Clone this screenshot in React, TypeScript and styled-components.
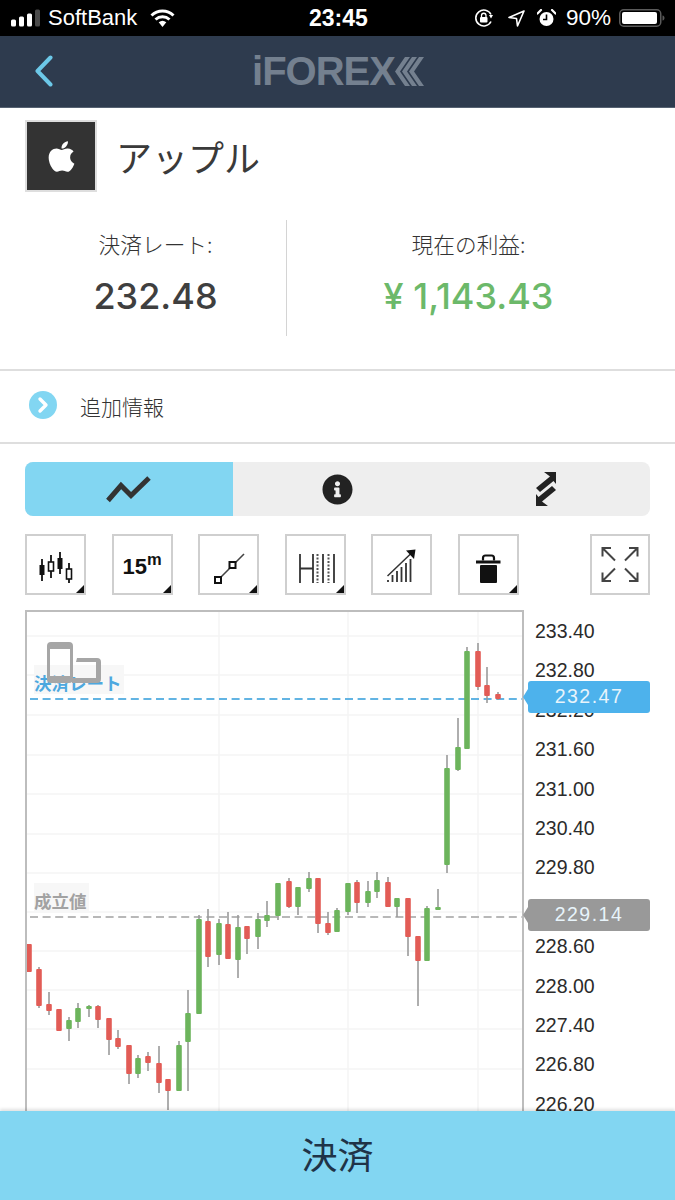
import React, {FC} from "react";
import styled, {createGlobalStyle} from "styled-components";
import {FaApple, FaInfoCircle} from "react-icons/fa";

const SANS = `"Liberation Sans", Arial, "Noto Sans CJK JP", sans-serif`;
const JP = `"Noto Sans CJK JP", "Noto Sans", sans-serif`;

// x, wick top, wick bottom, body top, body bottom, rising
type Candle = [number, number, number, number, number, boolean];
const CANDLES: Candle[] = [
  [29, 944, 972, 944, 972, false],
  [39, 967, 1008, 969, 1006, false],
  [49, 992, 1015, 1004, 1011, false],
  [59, 1009, 1031, 1009, 1031, false],
  [69, 1017, 1041, 1020, 1029, true],
  [78, 1003, 1028, 1008, 1022, true],
  [89, 1005, 1017, 1006, 1009, true],
  [98, 1005, 1028, 1006, 1020, false],
  [109, 1018, 1055, 1018, 1040, false],
  [118, 1030, 1049, 1038, 1047, false],
  [129, 1045, 1084, 1045, 1074, false],
  [138, 1055, 1078, 1058, 1074, true],
  [148, 1052, 1071, 1056, 1063, false],
  [159, 1046, 1093, 1063, 1083, false],
  [168, 1079, 1110, 1079, 1091, false],
  [179, 1041, 1091, 1045, 1091, true],
  [188, 990, 1091, 1013, 1042, true],
  [199, 915, 1014, 919, 1014, true],
  [208, 909, 967, 921, 957, false],
  [219, 919, 965, 923, 955, true],
  [228, 912, 959, 924, 959, false],
  [238, 915, 978, 927, 960, true],
  [247, 926, 954, 926, 939, false],
  [258, 913, 949, 919, 937, true],
  [267, 901, 927, 915, 921, true],
  [278, 883, 920, 883, 916, true],
  [289, 878, 908, 881, 907, false],
  [298, 887, 915, 887, 907, true],
  [309, 872, 892, 878, 889, true],
  [318, 878, 933, 878, 924, false],
  [328, 912, 935, 923, 933, false],
  [337, 908, 932, 910, 932, true],
  [348, 883, 915, 883, 912, true],
  [357, 880, 913, 882, 903, false],
  [368, 881, 907, 891, 903, true],
  [377, 872, 898, 880, 892, true],
  [388, 877, 907, 882, 907, false],
  [397, 898, 917, 898, 907, true],
  [408, 898, 956, 898, 937, false],
  [418, 936, 1006, 936, 961, false],
  [427, 906, 961, 908, 961, true],
  [438, 889, 910, 907, 910, true],
  [447, 755, 873, 768, 865, true],
  [458, 718, 771, 747, 770, true],
  [467, 647, 749, 651, 749, true],
  [478, 643, 690, 651, 687, false],
  [487, 667, 703, 685, 696, false],
  [498, 692, 700, 694, 699, false],
];
const GRID_Y = [636, 675, 715, 755, 794, 834, 873, 912, 951, 990, 1029, 1069];
const GRID_X = [219, 348, 478];
const PRICES = ["233.40", "232.80", "232.20", "231.60", "231.00", "230.40", "229.80", "229.20", "228.60", "228.00", "227.40", "226.80", "226.20"];

const App: FC = () => <Page>
  <GlobalStyle/>
  <StatusBar>
    <StatusSide>
      <SignalIcon/>
      <Carrier>SoftBank</Carrier>
      <WifiIcon/>
    </StatusSide>
    <Clock>23:45</Clock>
    <StatusRight>
      <RotationLockIcon/>
      <LocationIcon/>
      <AlarmIcon/>
      <Percent>90%</Percent>
      <BatteryIcon/>
    </StatusRight>
  </StatusBar>

  <NavBar>
    <BackIcon/>
    <Logo>
      <LogoText>iFOREX</LogoText>
      <LogoChevrons/>
    </Logo>
  </NavBar>

  <ProductHeader>
    <ProductIcon><FaApple size={35} color="#fff"/></ProductIcon>
    <ProductName>アップル</ProductName>
  </ProductHeader>

  <Stats>
    <Stat>
      <StatLabel>決済レート:</StatLabel>
      <StatValue>232.48</StatValue>
    </Stat>
    <StatDivider/>
    <Stat>
      <StatLabel>現在の利益:</StatLabel>
      <StatValue $positive>¥ 1,143.43</StatValue>
    </Stat>
  </Stats>

  <InfoRow>
    <InfoBullet>
      <svg width="28" height="28" viewBox="0 0 28 28">
        <path d="M11 8l6 6-6 6" fill="none" stroke="#fff" strokeWidth="3.4" strokeLinecap="round" strokeLinejoin="round"/>
      </svg>
    </InfoBullet>
    <InfoText>追加情報</InfoText>
  </InfoRow>

  <Tabs>
    <Tab $active><LineTabIcon/></Tab>
    <Tab><FaInfoCircle size={31} color="#222"/></Tab>
    <Tab><SwapTabIcon/></Tab>
  </Tabs>

  <Tools>
    <ToolButton $menu><CandlesTool/></ToolButton>
    <ToolButton $menu><PeriodText>15<sup>m</sup></PeriodText></ToolButton>
    <ToolButton $menu><LineTool/></ToolButton>
    <ToolButton $menu><FibTool/></ToolButton>
    <ToolButton><VolumeTool/></ToolButton>
    <ToolButton $menu><TrashTool/></ToolButton>
    <ExpandButton><ExpandTool/></ExpandButton>
  </Tools>

  <ChartRow>
    <ChartFrame>
      <ChartSvg viewBox="27 612 495 501">
        {GRID_Y.map(y => <line key={y} x1="27" x2="522" y1={y} y2={y} stroke="#f4f4f4" strokeWidth="1.5"/>)}
        {GRID_X.map(x => <line key={x} x1={x} x2={x} y1="612" y2="1113" stroke="#f4f4f4" strokeWidth="1.5"/>)}
        <line x1="30" x2="523" y1="699" y2="699" stroke="#62b4e3" strokeWidth="2" strokeDasharray="8 4.6"/>
        <line x1="30" x2="523" y1="917" y2="917" stroke="#b8b8b8" strokeWidth="2" strokeDasharray="8 4.6"/>
        {CANDLES.map(([x, wickTop, wickBottom, bodyTop, bodyBottom, rising]) => <g key={x}>
          <line x1={x} x2={x} y1={wickTop} y2={wickBottom} stroke="#9a9a9a" strokeWidth="1.6"/>
          <rect x={x - 2.8} y={bodyTop} width="5.6" height={bodyBottom - bodyTop} rx="1" fill={rising ? "#6cb45c" : "#e25c56"}/>
        </g>)}
      </ChartSvg>
      <LineLabel $color="#4da8df" $top={53}>決済レート</LineLabel>
      <LineLabel $color="#a2a2a2" $top={271}>成立値</LineLabel>
      <DevicesBadge viewBox="46 641 56 43">
        <g fill="#a6a6a6">
          <path d="M77 658h20a4 4 0 0 1 4 4v17a4 4 0 0 1-4 4H72v-5h24v-16H76z"/>
          <path fillRule="evenodd" d="M51 642h18a4 4 0 0 1 4 4v33a4 4 0 0 1-4 4H51a4 4 0 0 1-4-4v-33a4 4 0 0 1 4-4zm-1 7v27h20v-27z"/>
        </g>
      </DevicesBadge>
    </ChartFrame>
    <PriceAxis>
      {PRICES.map(price => <Price key={price}>{price}</Price>)}
    </PriceAxis>
    <PriceTag $color="#4db2ec" $top={71}>232.47</PriceTag>
    <PriceTag $color="#999999" $top={289}>229.14</PriceTag>
  </ChartRow>

  <SettleButton>決済</SettleButton>
</Page>;
export default App;

const SignalIcon: FC = () => <svg width="30" height="18" viewBox="0 0 30 18">
  <g fill="#fff">
    <rect x="0" y="10.5" width="5" height="7" rx="1.5"/>
    <rect x="8" y="7.5" width="5" height="10" rx="1.5"/>
    <rect x="16" y="4.5" width="5" height="13" rx="1.5"/>
  </g>
  <rect x="24" y="0.5" width="5" height="17" rx="1.5" fill="#4a4a4a"/>
</svg>;

const WifiIcon: FC = () => <svg width="25" height="18" viewBox="0 0 25 18">
  <g fill="none" stroke="#fff" strokeWidth="3">
    <path d="M1.5 6.5a16 16 0 0 1 22 0"/>
    <path d="M5.5 10.5a10.5 10.5 0 0 1 14 0"/>
  </g>
  <path d="M8.7 13.2a6 6 0 0 1 7.6 0L12.5 18z" fill="#fff"/>
</svg>;

const RotationLockIcon: FC = () => <svg width="22" height="18" viewBox="0 0 22 18">
  <path d="M17 5.5A8 8 0 1 0 17 12.5" fill="none" stroke="#fff" strokeWidth="1.6"/>
  <path d="M15 8l4 0-2-3.500z" transform="rotate(180 17 7)" fill="#fff"/>
  <rect x="6" y="8" width="7.500" height="5.500" rx="1" fill="#fff"/>
  <path d="M7.500 8V6.500a2.200 2.200 0 0 1 4.500 0V8" fill="none" stroke="#fff" strokeWidth="1.300"/>
</svg>;

const LocationIcon: FC = () => <svg width="17" height="17" viewBox="0 0 17 17">
  <path d="M16 1L1 7.500l7.500 1 1 7.500z" fill="none" stroke="#fff" strokeWidth="1.600" strokeLinejoin="round"/>
</svg>;

const AlarmIcon: FC = () => <svg width="19" height="18" viewBox="0 0 19 18">
  <circle cx="9.500" cy="10" r="7" fill="#fff"/>
  <path d="M9.500 5.500V10.500H6" fill="none" stroke="#000" strokeWidth="1.600"/>
  <path d="M0.500 4.500L4 1M18.500 4.500L15 1" stroke="#fff" strokeWidth="2.200" strokeLinecap="round"/>
</svg>;

const BatteryIcon: FC = () => <svg width="46" height="18" viewBox="0 0 46 18">
  <rect x="0.750" y="0.750" width="41" height="16.500" rx="4" fill="none" stroke="#5a5a5a" strokeWidth="1.500"/>
  <rect x="3" y="3" width="35" height="12" rx="2" fill="#fff"/>
  <path d="M43.500 6.500c1.500.3 2 1.300 2 2.500s-.5 2.200-2 2.500z" fill="#5a5a5a"/>
</svg>;

const BackIcon: FC = () => <BackSvg viewBox="0 0 18 32">
  <path d="M15.500 2.500L2.500 16l13 13.500" fill="none" stroke="#6cc8e8" strokeWidth="4" strokeLinecap="round" strokeLinejoin="round"/>
</BackSvg>;

const LogoChevrons: FC = () => <svg width="29" height="29" viewBox="0 0 29 29">
  <g fill="#74808f">
    <path d="M0 14.500L10 0h5L5 14.500 15 29h-5z"/>
    <path d="M7 14.500L17 0h5L12 14.500 22 29h-5z"/>
    <path d="M14 14.500L24 0h5L19 14.500 29 29h-5z"/>
  </g>
</svg>;

const LineTabIcon: FC = () => <svg width="46" height="28" viewBox="0 0 46 28">
  <path d="M2 25.500L15 10.500l10 10L43 3" fill="none" stroke="#333" strokeWidth="5"/>
</svg>;

const SwapTabIcon: FC = () => <svg width="20" height="34" viewBox="0 0 20 34">
  <g fill="#222">
    <path d="M8 0h12v12l-2.500-3L4 20l-4-4L14 4.500z"/>
    <path d="M12 34H0V22l2.500 3L16 14l4 4L6 29.500z"/>
  </g>
</svg>;

const CandlesTool: FC = () => <ToolSvg viewBox="1 1 57 57">
  <g stroke="#111" strokeWidth="1.800">
    <line x1="16" x2="16" y1="24" y2="46"/>
    <line x1="25" x2="25" y1="20" y2="43"/>
    <line x1="34" x2="34" y1="17" y2="39"/>
    <line x1="43" x2="43" y1="28" y2="48"/>
  </g>
  <rect x="13.500" y="30" width="5" height="10" fill="#111"/>
  <rect x="22.500" y="27" width="5" height="9" fill="#fff" stroke="#111" strokeWidth="1.600"/>
  <rect x="31.500" y="23" width="5" height="11" fill="#111"/>
  <rect x="40.500" y="34" width="5" height="10" fill="#fff" stroke="#111" strokeWidth="1.600"/>
</ToolSvg>;

const LineTool: FC = () => <ToolSvg viewBox="1 1 57 57">
  <line x1="19" y1="45" x2="45" y2="19" stroke="#444" strokeWidth="1.600"/>
  <rect x="16" y="42" width="6" height="6" fill="#fff" stroke="#111" strokeWidth="2"/>
  <rect x="30.500" y="27" width="6" height="6" fill="#fff" stroke="#111" strokeWidth="2"/>
</ToolSvg>;

const FibTool: FC = () => <ToolSvg viewBox="1 1 57 57">
  <g fill="none" stroke="#333" strokeWidth="1.800">
    <path d="M14 19v29M27 19v29M14 33.500h13M37 19v29M48 19v29"/>
  </g>
  <g fill="none" stroke="#555" strokeWidth="2" strokeDasharray="2 1.500">
    <path d="M31.500 19v29M42.500 19v29"/>
  </g>
</ToolSvg>;

const VolumeTool: FC = () => <ToolSvg viewBox="1 1 57 57">
  <g stroke="#333" strokeWidth="1.800">
    <path d="M16 47v-2M20.500 47v-7M25 47v-11M29.500 47v-15M34 47v-19M38.500 47v-23"/>
  </g>
  <line x1="15.500" y1="41" x2="38.500" y2="19" stroke="#333" strokeWidth="1.500"/>
  <path d="M34 15.500l9.500-1-1.500 9.500z" fill="#111"/>
</ToolSvg>;

const TrashTool: FC = () => <ToolSvg viewBox="1 1 57 57">
  <path d="M24 25.500v-2.500a2.500 2.500 0 0 1 2.500-2.500h6a2.500 2.500 0 0 1 2.500 2.500v2.500" fill="none" stroke="#111" strokeWidth="2.200"/>
  <rect x="17" y="25.500" width="24.500" height="3" fill="#111"/>
  <rect x="21" y="30" width="17" height="18" rx="1" fill="#111"/>
</ToolSvg>;

const ExpandTool: FC = () => <ToolSvg viewBox="1 1 56 57">
  <g fill="none" stroke="#444" strokeWidth="2">
    <path d="M20 13h-8.500v8.500M12 13.500l12 12"/>
    <path d="M38 13h8.500v8.500M46 13.500L34 25.500"/>
    <path d="M20 46h-8.500v-8.500M12 45.500l12-12"/>
    <path d="M38 46h8.500v-8.500M46 45.500L34 33.500"/>
  </g>
</ToolSvg>;

const GlobalStyle = createGlobalStyle`
html, body {
  margin: 0;
  padding: 0;
  background: #fff;
}
* {
  box-sizing: border-box;
}
`;

const Page = styled.div`
position: relative;
width: 675px;
height: 1200px;
overflow: hidden;
background: #fff;
font-family: ${JP};
`;

const StatusBar = styled.div`
position: relative;
display: flex;
align-items: center;
justify-content: space-between;
height: 36px;
padding: 0 10px 0 11px;
background: #000;
color: #fff;
font-family: ${SANS};
`;
const StatusSide = styled.div`
display: flex;
align-items: center;
`;
const Carrier = styled.span`
margin: 0 13px 0 7px;
font-size: 22px;
`;
const Clock = styled.span`
position: absolute;
left: 309px;
font-size: 23px;
font-weight: 700;
`;
const StatusRight = styled.div`
display: flex;
align-items: center;
gap: 12px;
`;
const Percent = styled.span`
font-size: 22.500px;
margin: 0 -4px 0 -2px;
`;

const NavBar = styled.div`
position: relative;
display: flex;
align-items: center;
justify-content: center;
height: 72px;
background: #2e3b4e;
border-bottom: 1px solid #566272;
`;
const BackSvg = styled.svg`
position: absolute;
left: 35px;
top: 19px;
width: 18px;
height: 32px;
`;
const Logo = styled.div`
display: flex;
align-items: center;
margin-left: 1px;
`;
const LogoText = styled.span`
font-family: ${SANS};
font-size: 40px;
font-weight: 700;
line-height: 29px;
letter-spacing: -1px;
color: #74808f;
`;

const ProductHeader = styled.div`
display: flex;
align-items: center;
gap: 19px;
padding: 12px 25px 0;
`;
const ProductIcon = styled.div`
display: flex;
align-items: center;
justify-content: center;
width: 72px;
height: 72px;
background: #333;
border: 2px solid #dedede;
`;
const ProductName = styled.div`
font-size: 36px;
font-weight: 400;
line-height: 72px;
color: #3a3a3a;
`;

const Stats = styled.div`
display: grid;
grid-template-columns: 261px 1px 1fr;
margin-top: 28px;
padding: 0 25px 33px;
border-bottom: 2px solid #dedede;
`;
const Stat = styled.div`
display: flex;
flex-direction: column;
align-items: center;
height: 116px;
`;
const StatDivider = styled.div`
background: #d4d4d4;
`;
const StatLabel = styled.div`
margin-top: 9px;
font-size: 21.700px;
font-weight: 300;
line-height: 30px;
color: #333;
`;
const StatValue = styled.div<{ $positive?: boolean }>`
margin-top: 12px;
font-family: Inter, ${SANS};
font-size: 36px;
font-weight: 500;
line-height: 50px;
color: ${({$positive}) => $positive ? "#6cb96a" : "#3f3f3f"};
`;

const InfoRow = styled.div`
display: flex;
align-items: center;
gap: 23px;
height: 73px;
padding: 0 0 4px 29px;
border-bottom: 2px solid #dedede;
`;
const InfoBullet = styled.div`
width: 28px;
height: 28px;
border-radius: 50%;
background: #82d6f2;
`;
const InfoText = styled.div`
margin-top: 2px;
font-size: 21px;
font-weight: 300;
color: #333;
`;

const Tabs = styled.div`
display: grid;
grid-template-columns: 208px 208px 209px;
height: 54px;
margin: 18px 25px 0;
border-radius: 8px;
overflow: hidden;
background: #eeeeee;
`;
const Tab = styled.div<{ $active?: boolean }>`
display: flex;
align-items: center;
justify-content: center;
background: ${({$active}) => $active ? "#82d6f2" : "transparent"};
`;

const Tools = styled.div`
display: flex;
align-items: center;
gap: 25.500px;
height: 61px;
margin: 18px 25px 0;
`;
const ToolButton = styled.div<{ $menu?: boolean }>`
position: relative;
display: flex;
align-items: center;
justify-content: center;
width: 61px;
height: 61px;
border: 2px solid #cfcfcf;
background: #fff;

&::after {
  content: "";
  display: ${({$menu}) => $menu ? "block" : "none"};
  position: absolute;
  right: 0;
  bottom: 0;
  border-style: solid;
  border-width: 0 0 8px 8px;
  border-color: transparent transparent #111 transparent;
}
`;
const ExpandButton = styled(ToolButton)`
width: 60px;
margin-left: auto;
`;
const ToolSvg = styled.svg`
display: block;
width: 100%;
height: 100%;
`;
const PeriodText = styled.div`
font-family: ${SANS};
font-size: 22px;
font-weight: 700;
line-height: 1;
color: #111;
margin-top: 5px;

sup {
  font-size: 16.500px;
  font-weight: 700;
  line-height: 0;
  vertical-align: 9px;
}
`;

const ChartRow = styled.div`
position: relative;
display: flex;
margin: 15px 0 0 25px;
`;
const ChartFrame = styled.div`
position: relative;
width: 499px;
height: 520px;
border: 2px solid #bdbdbd;
border-bottom: 0;
`;
const ChartSvg = styled.svg`
display: block;
width: 495px;
height: 501px;
`;
const LineLabel = styled.div<{ $color: string; $top: number }>`
position: absolute;
left: 7px;
top: ${({$top}) => $top}px;
padding: 7px 2px 0 0;
background: #f7f7f7;
font-size: 17.500px;
font-weight: 700;
line-height: 22px;
color: ${({$color}) => $color};
`;
const DevicesBadge = styled.svg`
position: absolute;
left: 19px;
top: 29px;
width: 56px;
height: 43px;
`;
const PriceAxis = styled.div`
display: flex;
flex-direction: column;
padding: 2px 0 0 11px;
`;
const Price = styled.div`
height: 39.4px;
font-family: ${SANS};
font-size: 19.500px;
line-height: 39.4px;
color: #2b2b2b;
`;
const PriceTag = styled.div<{ $color: string; $top: number }>`
position: absolute;
left: 503px;
top: ${({$top}) => $top}px;
width: 122px;
height: 32px;
border-radius: 3px;
background: ${({$color}) => $color};
font-family: ${SANS};
font-size: 19.500px;
line-height: 31px;
letter-spacing: 1.500px;
text-align: center;
color: #e8f4fb;

&::before {
  content: "";
  position: absolute;
  left: -5px;
  top: 8px;
  border-style: solid;
  border-width: 8px 5px 8px 0;
  border-color: transparent ${({$color}) => $color} transparent transparent;
}
`;

const SettleButton = styled.div`
position: absolute;
left: 0;
right: 0;
bottom: 0;
height: 89px;
background: #82d6f2;
box-shadow: 0 -2px 3px rgba(0, 0, 0, 0.12);
font-size: 36px;
font-weight: 400;
line-height: 85px;
text-align: center;
color: #1f3347;
`;
